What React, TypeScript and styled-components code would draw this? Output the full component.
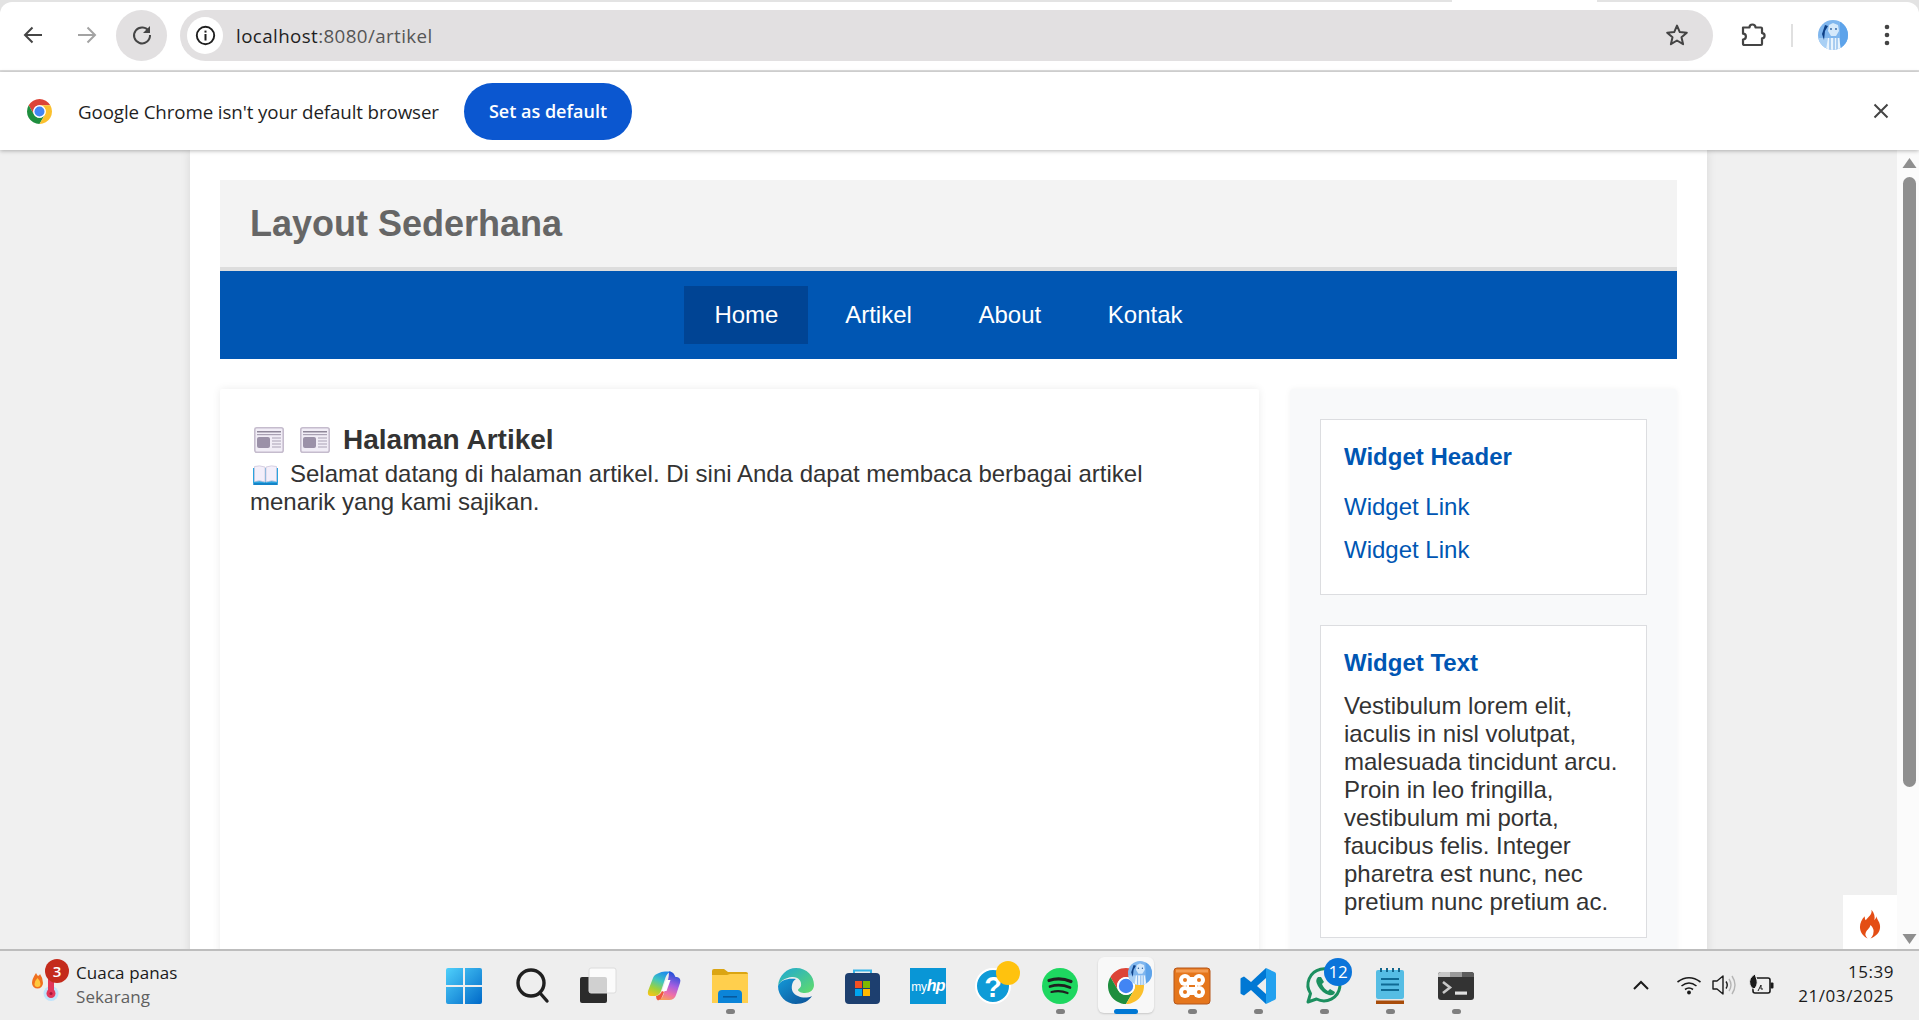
import React from "react";
import styled, { createGlobalStyle } from "styled-components";

const Global = createGlobalStyle`
  html, body { margin: 0; padding: 0; height: 100%; overflow: hidden; background: #f0f0f0; }
  * { box-sizing: border-box; }
`;

const UI = `"Open Sans", "Noto Sans", sans-serif`;
const WEB = `"Liberation Sans", Arial, sans-serif`;

const Shell = styled.div`
  height: 100vh;
  display: flex;
  flex-direction: column;
  overflow: hidden;
  position: relative;
`;

/* ---------- browser chrome ---------- */
const TabEdge = styled.div`
  background: #e3e3e3;
  padding-top: 2px;
  flex: none;
  position: relative;
`;
const TabSliver = styled.div`
  position: absolute;
  top: 0;
  left: 1452px;
  width: 145px;
  height: 2px;
  background: #fff;
`;
const Toolbar = styled.div`
  height: 70px;
  background: #fff;
  border-radius: 12px 12px 0 0;
  border-bottom: 2px solid #dcdcdc;
  display: flex;
  align-items: center;
  padding: 0 16px 2px 0;
`;
const NavIcon = styled.div<{ $w: number; $active?: boolean; $ml?: number }>`
  width: ${(p) => p.$w}px;
  height: 51px;
  margin-left: ${(p) => p.$ml ?? 0}px;
  flex: none;
  border-radius: 26px;
  background: ${(p) => (p.$active ? "#e2e0e1" : "transparent")};
  display: flex;
  align-items: center;
  justify-content: center;
`;
const Omnibox = styled.div`
  width: 1533px;
  margin-left: 13px;
  height: 51px;
  flex: none;
  border-radius: 26px;
  background: #e2e0e1;
  display: flex;
  align-items: center;
  padding: 0 24px 0 7px;
`;
const InfoChip = styled.div`
  width: 36px;
  height: 37px;
  border-radius: 50%;
  background: #fff;
  display: flex;
  align-items: center;
  justify-content: center;
  flex: none;
`;
const Url = styled.span`
  font: 400 18.75px ${UI};
  letter-spacing: 0.4px;
  margin-left: 13px;
  color: #555;
  flex: 1;
  b { font-weight: 400; color: #1f1f1f; }
`;
const ToolRight = styled.div`
  display: flex;
  align-items: center;
  flex: 1;
  margin-left: 27px;
`;
const Divider = styled.div`
  width: 2px;
  height: 23px;
  background: #e0e0e0;
  margin: 0 25px 0 25px;
`;
const Dots = styled.div`
  margin-left: 36px;
  display: flex;
`;
const InfoBar = styled.div`
  height: 78px;
  flex: none;
  background: #fff;
  display: flex;
  align-items: center;
  padding: 0 26px 0 27px;
  position: relative;
  z-index: 2;
  box-shadow: 0 1px 4px rgba(0, 0, 0, 0.28);
`;
const InfoText = styled.span`
  font: 400 18.75px ${UI};
  letter-spacing: -0.12px;
  color: #1f1f1f;
  margin-left: 26px;
  width: 386px;
  white-space: nowrap;
`;
const DefaultBtn = styled.div`
  width: 168px;
  height: 57px;
  border-radius: 29px;
  background: #0b57d0;
  color: #fff;
  font: 600 18px ${UI};
  display: flex;
  align-items: center;
  justify-content: center;
`;
const InfoClose = styled.div`
  margin-left: auto;
  display: flex;
  margin-right: 4px;
`;

/* ---------- viewport + page ---------- */
const Viewport = styled.div`
  flex: 1;
  min-height: 0;
  display: flex;
  position: relative;
  overflow: hidden;
`;
const PageArea = styled.div`
  flex: 1;
  min-width: 0;
  background: #f0f0f0;
  padding-left: 190px;
  overflow: hidden;
`;
const Container = styled.div`
  width: 1517px;
  background: #fff;
  padding: 30px;
  height: 1400px;
  box-shadow: 0 0 10px rgba(0, 0, 0, 0.1);
  font-family: ${WEB};
`;
const SiteHeader = styled.header`
  height: 91px;
  background: #f3f3f3;
  border-bottom: 4px solid #ddd;
  padding: 0 30px;
  display: flex;
  align-items: center;
`;
const SiteTitle = styled.h1`
  margin: 0;
  font-size: 36px;
  font-weight: 700;
  color: #666;
`;
const SiteNav = styled.nav`
  height: 88px;
  background: #0056b3;
  display: flex;
  justify-content: center;
  align-items: center;
  gap: 6.67px;
`;
const NavLink = styled.a<{ $active?: boolean }>`
  height: 58px;
  padding: 0 30px;
  display: flex;
  align-items: center;
  color: #fff;
  font-size: 24px;
  background: ${(p) => (p.$active ? "#004494" : "transparent")};
`;
const Columns = styled.div`
  display: flex;
  gap: 31px;
  margin-top: 30px;
  align-items: flex-start;
`;
const MainCard = styled.main`
  width: 1039px;
  height: 900px;
  background: #fff;
  padding: 35px 30px;
  box-shadow: 0 0 8px rgba(0, 0, 0, 0.08);
  border-radius: 2px;
`;
const ArticleTitle = styled.h3`
  margin: 0;
  padding-left: 4px;
  display: flex;
  align-items: center;
  gap: 16px;
  font-size: 28px;
  line-height: 32px;
  color: #333;
  svg { flex: none; }
  svg:last-of-type { margin-right: -3px; }
`;
const ArticleBody = styled.p`
  margin: 0;
  padding-top: 4px;
  font-size: 24px;
  line-height: 28px;
  color: #333;
  svg { vertical-align: -3px; margin: 0 12px 0 3px; }
`;
const Sidebar = styled.aside`
  width: 387px;
  height: 900px;
  background: #f8f9fa;
  padding: 30px;
  border-radius: 4px;
  box-shadow: 0 0 6px rgba(0, 0, 0, 0.05);
  display: flex;
  flex-direction: column;
  gap: 30px;
`;
const Widget = styled.section`
  background: #fff;
  border: 1px solid #dcdde0;
  padding: 23px 23px 21px;
`;
const WidgetTitle = styled.h4`
  margin: 0;
  font-size: 24px;
  line-height: 28px;
  color: #0056b3;
`;
const WidgetLinks = styled.div`
  padding: 7px 0 9px;
`;
const WidgetLink = styled.a`
  display: block;
  margin-top: 15px;
  font-size: 24px;
  line-height: 28px;
  color: #0056b3;
`;
const WidgetText = styled.p`
  margin: 15px 0 0;
  font-size: 24px;
  line-height: 28px;
  color: #333;
`;
const Scrollbar = styled.div`
  width: 22px;
  flex: none;
  background: #fbfbfb;
  display: flex;
  flex-direction: column;
  align-items: center;
  padding: 7px 0 4px 2px;
`;
const ScrollThumb = styled.div`
  width: 13px;
  height: 610px;
  margin-top: 8px;
  background: #8f8f8f;
  border-radius: 7px;
`;
const ScrollSpacer = styled.div`
  flex: 1;
`;
const FlameBadge = styled.div`
  position: absolute;
  right: 22px;
  bottom: 0;
  width: 54px;
  height: 54px;
  background: #fff;
  display: flex;
  align-items: center;
  justify-content: center;
  padding-top: 3px;
`;

/* ---------- taskbar ---------- */
const Taskbar = styled.footer`
  height: 71px;
  flex: none;
  background: #eeeeee;
  border-top: 2px solid #bdbdbd;
  display: flex;
  position: relative;
  z-index: 3;
`;
const Weather = styled.div`
  width: 431px;
  flex: none;
  display: flex;
  align-items: center;
  padding-left: 30px;
`;
const WeatherIcon = styled.div`
  width: 46px;
  height: 60px;
  position: relative;
  flex: none;
  svg { position: absolute; left: 0; top: 0; }
`;
const RedBadge = styled.span`
  position: absolute;
  left: 15px;
  top: 3px;
  width: 24px;
  height: 24px;
  border-radius: 50%;
  background: #c42b1c;
  color: #fff;
  font: 600 15px/24px ${UI};
  text-align: center;
`;
const WeatherText = styled.div`
  font: 400 17px/24px ${UI};
  letter-spacing: 0.1px;
  color: #1a1a1a;
  margin-top: -2px;
  small { display: block; font-size: 17px; color: #5f5f5f; }
`;
const Apps = styled.div`
  display: flex;
  flex: none;
`;
const AppSlot = styled.div<{ $open?: boolean; $focus?: boolean }>`
  width: 66px;
  height: 69px;
  position: relative;
  display: flex;
  align-items: center;
  justify-content: center;
  &:first-child { margin-right: 2px; }
  &::before {
    content: "";
    display: ${(p) => (p.$focus ? "block" : "none")};
    position: absolute;
    left: 5px;
    top: 6px;
    width: 56px;
    height: 56px;
    background: #f8f8f8;
    border-radius: 6px;
    box-shadow: 0 1px 2px rgba(0, 0, 0, 0.16);
  }
  &::after {
    content: "";
    display: ${(p) => (p.$open || p.$focus ? "block" : "none")};
    position: absolute;
    left: ${(p) => (p.$focus ? "21px" : "29px")};
    top: 58px;
    width: ${(p) => (p.$focus ? "24px" : "9px")};
    height: 5px;
    border-radius: 3px;
    background: ${(p) => (p.$focus ? "#0078d4" : "#7f7f7f")};
  }
  svg { position: relative; overflow: visible; }
`;
const CountBadge = styled.span`
  position: absolute;
  left: 33px;
  top: 7px;
  width: 28px;
  height: 28px;
  border-radius: 50%;
  background: #0a74da;
  color: #fff;
  font: 400 17px/28px ${UI};
  letter-spacing: -0.3px;
  text-align: center;
`;
const Tray = styled.div`
  margin-left: auto;
  display: flex;
  align-items: center;
  padding-right: 25px;
  padding-bottom: 1px;
`;
const TrayIcons = styled.div`
  display: flex;
  align-items: center;
  margin-right: 23px;
`;
const TrayGlyph = styled.span<{ $ml: number }>`
  display: flex;
  margin-left: ${(p) => p.$ml}px;
`;
const Clock = styled.div`
  font: 400 17px/24px ${UI};
  letter-spacing: 0.55px;
  color: #1a1a1a;
  text-align: right;
  margin-top: -2px;
`;
const MyHpTile = styled.div`
  width: 36px;
  height: 36px;
  background: #0996d6;
  color: #fff;
  font: 400 12px/36px ${WEB};
  letter-spacing: -0.2px;
  text-align: center;
  position: relative;
  b { font: italic 700 16px/36px ${WEB}; letter-spacing: -0.8px; }
`;

/* ---------- drawings ---------- */
const ChromeRing = () => (
  <>
    <path fill="#dc4437" d="M24 14h17.32A20 20 0 0 0 6.68 14l8.66 15A10 10 0 0 1 24 14z" />
    <path fill="#1e8e3e" d="M15.34 29 6.68 14A20 20 0 0 0 24 44l8.66-15a10 10 0 0 1-17.32 0z" />
    <path fill="#fbc02d" d="M24 14h17.32A20 20 0 0 1 24 44l8.66-15A10 10 0 0 0 24 14z" />
    <circle cx="24" cy="24" r="10" fill="#fff" />
    <circle cx="24" cy="24" r="8" fill="#4285f4" />
  </>
);
const ChromeLogo = ({ size }: { size: number }) => (
  <svg width={size} height={size} viewBox="4 4 40 40">
    <ChromeRing />
  </svg>
);
const ArrowBack = ({ c }: { c: string }) => (
  <svg width="22" height="22" viewBox="0 0 22 22" fill="none" stroke={c} strokeWidth="2">
    <path d="M20 11H3M10.5 3.5 3 11l7.5 7.5" />
  </svg>
);
const ArrowFwd = ({ c }: { c: string }) => (
  <svg width="22" height="22" viewBox="0 0 22 22" fill="none" stroke={c} strokeWidth="2">
    <path d="M2 11h17M11.5 3.5 19 11l-7.5 7.5" />
  </svg>
);
const Reload = () => (
  <svg width="22" height="22" viewBox="0 0 22 22" fill="none">
    <path d="M18 7.5A8 8 0 1 0 19 11" stroke="#454545" strokeWidth="2" />
    <path d="M19 2v7h-7z" fill="#454545" />
  </svg>
);
const InfoGlyph = () => (
  <svg width="21" height="21" viewBox="0 0 21 21" fill="none">
    <circle cx="10.5" cy="10.5" r="8.7" stroke="#1f1f1f" strokeWidth="1.9" />
    <rect x="9.5" y="9" width="2" height="6.5" fill="#1f1f1f" />
    <rect x="9.5" y="5.6" width="2" height="2" fill="#1f1f1f" />
  </svg>
);
const StarGlyph = () => (
  <svg width="24" height="24" viewBox="0 0 24 24" fill="none" stroke="#444" strokeWidth="2" strokeLinejoin="round">
    <path d="M12 2.6l2.8 6.5 7 .6-5.3 4.6 1.6 6.9-6.1-3.7-6.1 3.7 1.6-6.9L2.2 9.7l7-.6z" />
  </svg>
);
const PuzzleGlyph = () => (
  <svg width="26" height="26" viewBox="0 0 26 26" fill="none" stroke="#444" strokeWidth="2.2" strokeLinejoin="round">
    <path d="M3 5.5h6.5a3 3 0 0 1 6 0H21a1 1 0 0 1 1 1v4.6a2.6 2.6 0 0 1 0 5.2V22a1 1 0 0 1-1 1H4.5a1.5 1.5 0 0 1-1.500-1.500v-4a2.900 2.900 0 0 0 0-5.800z" />
  </svg>
);
const AvatarArt = () => (
  <>
    <rect width="30" height="30" fill="#7fb6ee" />
    <rect x="0" y="18" width="30" height="12" fill="#a9d0f5" />
    <rect x="22" y="0" width="8" height="30" fill="#5da3ea" />
    <path d="M11 5l4-2 5 2 1 6-3 5h-5l-3-5z" fill="#d5e9fb" />
    <path d="M10 18h11l2 12H8z" fill="#e9f4fd" />
    <path d="M12 18v12M16 18v12M19 18v12" stroke="#6aa6e4" strokeWidth="1" />
    <circle cx="13" cy="9" r="0.9" fill="#2c5e9e" />
    <circle cx="18" cy="9" r="0.9" fill="#2c5e9e" />
    <path d="M4 14l3-9 3 1-3 5-1 9z" fill="#0d3f86" />
  </>
);
const Avatar = () => (
  <svg width="30" height="30" viewBox="0 0 30 30">
    <clipPath id="av"><circle cx="15" cy="15" r="15" /></clipPath>
    <g clipPath="url(#av)"><AvatarArt /></g>
  </svg>
);
const MenuDots = () => (
  <svg width="6" height="24" viewBox="0 0 6 24" fill="#444">
    <circle cx="3" cy="4" r="2.3" />
    <circle cx="3" cy="12" r="2.3" />
    <circle cx="3" cy="20" r="2.3" />
  </svg>
);
const CloseGlyph = () => (
  <svg width="16" height="16" viewBox="0 0 16 16" stroke="#444" strokeWidth="2">
    <path d="M1.5 1.5l13 13M14.5 1.5l-13 13" />
  </svg>
);
const Newspaper = () => (
  <svg width="30" height="26" viewBox="0 0 30 26">
    <rect x="0.8" y="0.8" width="28.4" height="24.4" rx="2" fill="#f1edf6" stroke="#c5bccd" strokeWidth="1.6" />
    <rect x="3" y="4" width="24" height="1.5" fill="#8f8799" />
    <rect x="3" y="7" width="24" height="1.2" fill="#a9a1b3" />
    <rect x="3" y="10" width="13" height="11" rx="2" fill="#9b91a8" />
    <path d="M18 11h9M18 14h9M18 17h9M18 20h9" stroke="#a9a1b3" strokeWidth="1.2" />
  </svg>
);
const Book = () => (
  <svg width="25" height="20" viewBox="0 0 25 20">
    <path d="M0 3v15h25V3z" fill="#2aa4e0" />
    <path d="M1.5 1.5q5-1.500 10.500.5v15q-5.500-2-10.500-.5z" fill="#f3effa" stroke="#cdc6dc" strokeWidth=".8" />
    <path d="M23.500 1.500q-5-1.500-10.500.5v15q5.500-2 10.500-.5z" fill="#f3effa" stroke="#cdc6dc" strokeWidth=".8" />
    <rect x="0" y="18" width="25" height="2" rx="1" fill="#1484c8" />
  </svg>
);
const Flame = () => (
  <svg width="23" height="30" viewBox="0 0 24 30">
    <path
      fill="#e44d14"
      d="M13 0c1 5-3 7-6 11-1-1-1-3-1-4-3 3-5 7-5 11 0 6 4 10 8 12-2-2-3-4-2-6 1-3 4-4 5-8 2 2 4 5 3 8 0 2-1 4-3 6 5-2 10-6 10-12 0-5-3-7-4-11 0 2-1 3-2 4C17 8 16 3 13 0z"
    />
  </svg>
);
const Triangle = ({ up }: { up?: boolean }) => (
  <svg width="15" height="12" viewBox="0 0 15 12" fill="#8f8f8f">
    <path d={up ? "M7.500 1 14.500 11H.5z" : "M.5 1h14L7.500 11z"} />
  </svg>
);
const Thermometer = () => (
  <svg width="46" height="60" viewBox="0 0 46 60">
    <path d="M2 27q0-4 4-10 1 2 2 3 2-1 2-2 3 4 3 9a5.500 5.500 0 0 1-11 0z" fill="#f0701f" />
    <path d="M4.500 28q0-3 3-6 3 3 3 6a3 3 0 0 1-6 0z" fill="#ffc83d" />
    <circle cx="21" cy="37.500" r="7.500" fill="#bfe3fb" />
    <rect x="18" y="20" width="6" height="16" fill="#e2375a" />
    <circle cx="21" cy="37.500" r="4.500" fill="#e2375a" />
    <circle cx="21" cy="37.500" r="1.500" fill="#a8143a" />
  </svg>
);
const WinLogo = () => (
  <svg width="36" height="36" viewBox="0 0 36 36">
    <defs>
      <linearGradient id="win" x1="0" y1="0" x2="1" y2="1">
        <stop offset="0" stopColor="#4fd0fb" />
        <stop offset="1" stopColor="#0069c8" />
      </linearGradient>
    </defs>
    <path fill="url(#win)" d="M2 0h15v17H0V2a2 2 0 0 1 2-2zM19 0h15a2 2 0 0 1 2 2v15H19zM0 19h17v17H2a2 2 0 0 1-2-2zM19 19h17v15a2 2 0 0 1-2 2H19z" />
  </svg>
);
const SearchIcon = () => (
  <svg width="33" height="35" viewBox="0 0 33 35" fill="none" stroke="#1f1f1f" strokeWidth="3.400">
    <circle cx="15" cy="15" r="13" />
    <path d="M24 25l7 8" strokeLinecap="round" />
  </svg>
);
const TaskView = () => (
  <svg width="36" height="35" viewBox="0 0 36 35">
    <rect x="0" y="9" width="27" height="26" rx="2" fill="#2b2b2b" />
    <rect x="9" y="0" width="27" height="25" rx="2" fill="#fff" fillOpacity=".78" stroke="#dcdcdc" />
  </svg>
);
const Copilot = () => (
  <svg width="34" height="30" viewBox="0 0 34 30">
    <defs>
      <linearGradient id="cp1" x1=".6" y1="0" x2=".2" y2="1">
        <stop offset="0" stopColor="#1f8fe8" /><stop offset=".35" stopColor="#3fc6c0" /><stop offset=".7" stopColor="#9fd13a" /><stop offset="1" stopColor="#f5c518" />
      </linearGradient>
      <linearGradient id="cp2" x1=".6" y1="0" x2=".3" y2="1">
        <stop offset="0" stopColor="#1b4fd8" /><stop offset=".45" stopColor="#a65fe0" /><stop offset=".75" stopColor="#ef6fa8" /><stop offset="1" stopColor="#f6a05a" />
      </linearGradient>
    </defs>
    <path fill="url(#cp1)" d="M12 2Q14 .5 18 .5h6q-4 1.500-5.500 6L14 20q-1.500 4.500-6 5H4q-4 0-3-5L6 7q1-3.500 6-5z" />
    <path fill="url(#cp2)" d="M22 .5q4 0 5.500 3.500l1 2H30q4.500 1 3 6l-4 12q-1.500 5-7 5H11q4-1 5.500-5.500L21 9q1-4 1-8.500z" />
    <path fill="#f0583c" d="M9 25q4-.5 6-5l2 1-2 5q-1 3-4 3.500-2-1-2-4.500z" />
    <path fill="#fff" d="M15 20l4-11 4.500 0-4 11z" />
  </svg>
);
const Explorer = () => (
  <svg width="36" height="34" viewBox="0 0 36 34">
    <path d="M0 2a2 2 0 0 1 2-2h10l4 3h18a2 2 0 0 1 2 2v4H0z" fill="#dba512" />
    <path d="M0 6h15l3-1h18v29H0z" fill="#ffcf4d" />
    <path d="M6 34V25a4 4 0 0 1 4-4h16a4 4 0 0 1 4 4v9z" fill="#0b84d8" />
    <rect x="11" y="27" width="14" height="1.600" fill="#075a9e" />
  </svg>
);
const Edge = () => (
  <svg width="36" height="36" viewBox="0 0 36 36">
    <defs>
      <linearGradient id="ed1" x1="0" y1="0" x2="1" y2="1">
        <stop offset="0" stopColor="#1499d8" /><stop offset="1" stopColor="#0b4f95" />
      </linearGradient>
      <linearGradient id="ed2" x1="0" y1="0" x2="1" y2="1">
        <stop offset="0" stopColor="#1ea7d6" /><stop offset="1" stopColor="#62dd68" />
      </linearGradient>
    </defs>
    <path fill="url(#ed1)" d="M0 18c0 10 8 18 18 18 7 0 13-3 16-8-4 2-10 2-14 0-5-2-7-6-6-11 .5-3 2-5 4-6C10 10 2 12 0 18z" />
    <path fill="url(#ed2)" d="M0 18C1 7 9 0 18 0c11 0 18 8 18 17 0 5-4 8-9 8-4 0-7-1.500-7-3 0-1 2-1.500 3-4 1-5-3-9.500-9-9S2 13 0 18z" />
  </svg>
);
const Store = () => (
  <svg width="35" height="36" viewBox="0 0 35 36">
    <path d="M9 7V2.500h17V7" fill="none" stroke="#37b3e8" strokeWidth="2" />
    <rect x="0" y="5" width="35" height="31" rx="4" fill="#1d3f6f" />
    <rect x="10" y="13" width="7" height="7" fill="#f25022" />
    <rect x="18" y="13" width="7" height="7" fill="#7fba00" />
    <rect x="10" y="21" width="7" height="7" fill="#00a4ef" />
    <rect x="18" y="21" width="7" height="7" fill="#ffb900" />
  </svg>
);
const Help = () => (
  <svg width="52" height="52" viewBox="0 0 52 52">
    <circle cx="25" cy="26" r="17" fill="#0f9bd7" stroke="#fff" strokeWidth="2" />
    <text x="25" y="37" fontFamily="Liberation Sans" fontWeight="700" fontSize="29" fill="#fff" textAnchor="middle">?</text>
    <circle cx="40" cy="13" r="12" fill="#ffc20e" />
  </svg>
);
const Spotify = () => (
  <svg width="36" height="36" viewBox="0 0 36 36" fill="none" stroke="#1f1f1f" strokeLinecap="round">
    <circle cx="18" cy="18" r="18" fill="#1ed760" stroke="none" />
    <path d="M7 12.500q11-3.500 22 1" strokeWidth="3.200" />
    <path d="M8 18.500q10-3 20 1" strokeWidth="2.700" />
    <path d="M9.500 24q8.500-2 16 1" strokeWidth="2.200" />
  </svg>
);
const ChromeApp = () => (
  <svg width="52" height="52" viewBox="0 0 52 52">
    <g transform="translate(26 26) scale(.9) translate(-24 -24)">
      <ChromeRing />
    </g>
    <clipPath id="av2"><circle cx="40" cy="13" r="12" /></clipPath>
    <g clipPath="url(#av2)">
      <g transform="translate(28 1) scale(.8)"><AvatarArt /></g>
    </g>
  </svg>
);
const Xampp = () => (
  <svg width="36" height="36" viewBox="0 0 36 36">
    <rect width="36" height="36" rx="3" fill="#e5761c" stroke="#b5561a" />
    <rect x="2" y="1.500" width="32" height="3" fill="#f49c52" />
    <circle cx="11" cy="12" r="6" fill="#fff" />
    <circle cx="25" cy="12" r="6" fill="#fff" />
    <circle cx="11" cy="24" r="6" fill="#fff" />
    <circle cx="25" cy="24" r="6" fill="#fff" />
    <rect x="13" y="9" width="10" height="18" fill="#fff" />
    <circle cx="11" cy="12" r="2" fill="#e5761c" />
    <circle cx="25" cy="12" r="2" fill="#e5761c" />
    <circle cx="11" cy="24" r="2" fill="#e5761c" />
    <circle cx="25" cy="24" r="2" fill="#e5761c" />
    <rect x="15" y="17" width="6" height="2" fill="#e5761c" />
  </svg>
);
const VsCode = () => (
  <svg width="36" height="36" viewBox="0 0 36 36">
    <path fill="#0078d4" d="M26 0 11 14 4 8.500 1 10a1 1 0 0 0-.500 1v14a1 1 0 0 0 .500 1l3 1.500L11 22l15 14V26L17 18l9-8z" />
    <path fill="#23a1ef" d="M26 0l8.500 4a2 2 0 0 1 1.500 2v24a2 2 0 0 1-1.500 2L26 36z" />
  </svg>
);
const WhatsApp = () => (
  <svg width="36" height="36" viewBox="0 0 36 36" fill="none">
    <path d="M2 34l2.500-8.500A16 16 0 1 1 10.500 31z" stroke="#1c8f5f" strokeWidth="3" strokeLinejoin="round" />
    <path d="M12 9q-3.500 3 0 9 4 7 11 9 5 1 6-3l-5-3-2 2q-4-2-6-7l2-2-3-5z" fill="#1c8f5f" />
  </svg>
);
const Notepad = () => (
  <svg width="28" height="36" viewBox="0 0 28 36">
    <rect x="0" y="2" width="28" height="29" rx="2" fill="#55bde4" />
    <rect x="0" y="31" width="28" height="1.500" fill="#e8e8e8" />
    <rect x="0" y="32.500" width="28" height="3.500" fill="#a84c0a" />
    <path d="M5 0v4M11 0v4M17 0v4M23 0v4" stroke="#10658c" strokeWidth="2" />
    <path d="M5 11h18M5 16.500h18M5 22h18" stroke="#0e6a94" strokeWidth="1.800" />
  </svg>
);
const Terminal = () => (
  <svg width="36" height="28" viewBox="0 0 36 28">
    <rect width="36" height="28" rx="3" fill="#333" />
    <path d="M3 0h9v5H0V3a3 3 0 0 1 3-3z" fill="#c7c7c7" />
    <rect x="12" width="12" height="5" fill="#9a9a9a" />
    <path d="M24 0h9a3 3 0 0 1 3 3v2H24z" fill="#5c5c5c" />
    <path d="M5 10l7 5.500-7 5.500" fill="none" stroke="#c8c8c8" strokeWidth="2.600" />
    <rect x="17" y="19.500" width="12" height="3.200" fill="#e0e0e0" />
  </svg>
);
const Chevron = () => (
  <svg width="18" height="12" viewBox="0 0 18 12" fill="none" stroke="#1a1a1a" strokeWidth="2">
    <path d="M2 10l7-7 7 7" />
  </svg>
);
const Wifi = () => (
  <svg width="26" height="20" viewBox="0 0 26 20" fill="none" stroke="#1a1a1a" strokeWidth="1.600">
    <path d="M1.500 7q11.500-8.500 23 0M5.500 11q7.500-6 15 0M9 14.500q4-3 8 0" />
    <circle cx="13" cy="17.500" r="1.900" fill="#1a1a1a" stroke="none" />
  </svg>
);
const Volume = () => (
  <svg width="26" height="22" viewBox="0 0 26 22" fill="none" stroke="#1a1a1a" strokeWidth="1.400">
    <path d="M2 7h4l6-5v18l-6-5H2z" strokeLinejoin="round" />
    <path d="M15 7.500q2.500 3.500 0 7" />
    <path d="M18 5q4 6 0 12M21 2q6 9 0 18" stroke="#b5b5b5" />
  </svg>
);
const Battery = () => (
  <svg width="28" height="22" viewBox="0 0 28 22">
    <rect x="6" y="4" width="17" height="15" rx="2" fill="none" stroke="#1a1a1a" strokeWidth="1.600" />
    <rect x="23.500" y="8.500" width="3" height="6" rx="1" fill="#1a1a1a" />
    <path d="M8 0Q1 4 3 11q1 3 4 4 4-3 3-9z" fill="#1a1a1a" stroke="#eee" />
    <path d="M11 17l3-6v4h2" fill="none" stroke="#1a1a1a" />
  </svg>
);

type Slot = { key: string; node: React.ReactNode; open?: boolean; focus?: boolean };
const slots: Slot[] = [
  { key: "win", node: <WinLogo /> },
  { key: "search", node: <SearchIcon /> },
  { key: "task", node: <TaskView /> },
  { key: "copilot", node: <Copilot /> },
  { key: "explorer", node: <Explorer />, open: true },
  { key: "edge", node: <Edge /> },
  { key: "store", node: <Store /> },
  { key: "myhp", node: <MyHpTile>my<b>hp</b></MyHpTile> },
  { key: "help", node: <Help /> },
  { key: "spotify", node: <Spotify />, open: true },
  { key: "chrome", node: <ChromeApp />, focus: true },
  { key: "xampp", node: <Xampp />, open: true },
  { key: "code", node: <VsCode />, open: true },
  { key: "wa", node: <><WhatsApp /><CountBadge>12</CountBadge></>, open: true },
  { key: "notes", node: <Notepad />, open: true },
  { key: "term", node: <Terminal />, open: true },
];

export default function App() {
  return (
    <Shell>
      <Global />
      <TabEdge>
        <TabSliver />
        <Toolbar>
          <NavIcon $w={66}><ArrowBack c="#454545" /></NavIcon>
          <NavIcon $w={42}><ArrowFwd c="#a3a3a3" /></NavIcon>
          <NavIcon $w={51} $active $ml={8}><Reload /></NavIcon>
          <Omnibox>
            <InfoChip><InfoGlyph /></InfoChip>
            <Url><b>localhost</b>:8080/artikel</Url>
            <StarGlyph />
          </Omnibox>
          <ToolRight>
            <PuzzleGlyph />
            <Divider />
            <Avatar />
            <Dots><MenuDots /></Dots>
          </ToolRight>
        </Toolbar>
      </TabEdge>
      <InfoBar>
        <ChromeLogo size={25} />
        <InfoText>Google Chrome isn't your default browser</InfoText>
        <DefaultBtn>Set as default</DefaultBtn>
        <InfoClose><CloseGlyph /></InfoClose>
      </InfoBar>
      <Viewport>
        <PageArea>
          <Container>
            <SiteHeader><SiteTitle>Layout Sederhana</SiteTitle></SiteHeader>
            <SiteNav>
              <NavLink $active>Home</NavLink>
              <NavLink>Artikel</NavLink>
              <NavLink>About</NavLink>
              <NavLink>Kontak</NavLink>
            </SiteNav>
            <Columns>
              <MainCard>
                <ArticleTitle><Newspaper /><Newspaper />Halaman Artikel</ArticleTitle>
                <ArticleBody>
                  <Book />Selamat datang di halaman artikel. Di sini Anda dapat membaca berbagai artikel menarik yang kami sajikan.
                </ArticleBody>
              </MainCard>
              <Sidebar>
                <Widget>
                  <WidgetTitle>Widget Header</WidgetTitle>
                  <WidgetLinks>
                    <WidgetLink>Widget Link</WidgetLink>
                    <WidgetLink>Widget Link</WidgetLink>
                  </WidgetLinks>
                </Widget>
                <Widget>
                  <WidgetTitle>Widget Text</WidgetTitle>
                  <WidgetText>
                    Vestibulum lorem elit, iaculis in nisl volutpat, malesuada tincidunt arcu. Proin in leo fringilla, vestibulum mi porta, faucibus felis. Integer pharetra est nunc, nec pretium nunc pretium ac.
                  </WidgetText>
                </Widget>
              </Sidebar>
            </Columns>
          </Container>
        </PageArea>
        <Scrollbar>
          <Triangle up />
          <ScrollThumb />
          <ScrollSpacer />
          <Triangle />
        </Scrollbar>
        <FlameBadge><Flame /></FlameBadge>
      </Viewport>
      <Taskbar>
        <Weather>
          <WeatherIcon><Thermometer /><RedBadge>3</RedBadge></WeatherIcon>
          <WeatherText>Cuaca panas<small>Sekarang</small></WeatherText>
        </Weather>
        <Apps>
          {slots.map((s) => (
            <AppSlot key={s.key} $open={s.open} $focus={s.focus}>{s.node}</AppSlot>
          ))}
        </Apps>
        <Tray>
          <TrayIcons>
            <Chevron />
            <TrayGlyph $ml={26}><Wifi /></TrayGlyph>
            <TrayGlyph $ml={9}><Volume /></TrayGlyph>
            <TrayGlyph $ml={10}><Battery /></TrayGlyph>
          </TrayIcons>
          <Clock>15:39<br />21/03/2025</Clock>
        </Tray>
      </Taskbar>
    </Shell>
  );
}
